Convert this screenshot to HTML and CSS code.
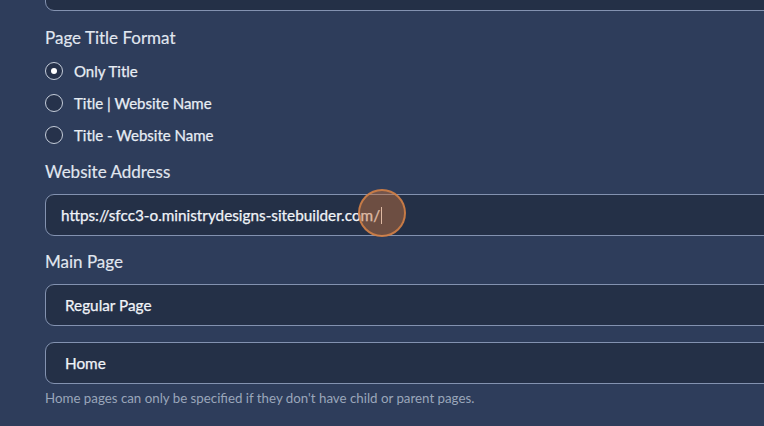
FILE: index.html
```html
<!DOCTYPE html>
<html lang="en">
<head>
<meta charset="utf-8">
<title>Site Settings</title>
<link rel="stylesheet" href="styles.css">
</head>
<body>
<div class="form">
  <div class="field field-top">
    <div class="input"></div>
  </div>

  <div class="field">
    <div class="label">Page Title Format</div>
    <div class="radios">
      <label class="radio-row"><span class="radio checked"></span><span>Only Title</span></label>
      <label class="radio-row"><span class="radio"></span><span>Title | Website Name</span></label>
      <label class="radio-row"><span class="radio"></span><span>Title - Website Name</span></label>
    </div>
  </div>

  <div class="field">
    <div class="label">Website Address</div>
    <div class="input input-url">
      <span class="value">https://sfcc3-o.ministrydesigns-sitebuilder.com/</span><span class="caret"></span>
      <span class="click"></span>
    </div>
  </div>

  <div class="field">
    <div class="label label-main">Main Page</div>
    <div class="input input-select"><span class="value">Regular Page</span></div>
    <div class="input input-select second"><span class="value">Home</span></div>
    <div class="help">Home pages can only be specified if they don't have child or parent pages.</div>
  </div>
</div>
</body>
</html>
```
FILE: styles.css
```css
html, body {
  margin: 0;
  padding: 0;
  overflow: hidden;
  background: #2e3d5b;
}
body {
  font-family: "Lato", "Noto Sans", sans-serif;
  color: #e3e9f2;
  width: 764px;
  height: 426px;
}
.form {
  display: flex;
  flex-direction: column;
  padding-left: 45px;
  width: 780px;
}
.field {
  display: flex;
  flex-direction: column;
}
.field-top {
  margin-top: -31px;
}
.label {
  font-size: 17px;
  line-height: 24px;
  color: #e1e7f0;
  margin-top: 15px;
  margin-bottom: 10px;
  -webkit-text-stroke: 0.15px #e1e7f0;
}
.label-main {
  margin-top: 14px;
}
.input {
  position: relative;
  box-sizing: border-box;
  height: 42px;
  background: #243047;
  border: 1px solid #8392b0;
  border-radius: 9px;
  display: flex;
  align-items: center;
  font-size: 15.3px;
  font-weight: 400;
  color: #f0f3f8;
  -webkit-text-stroke: 0.25px #f0f3f8;
}
.input-url {
  padding-left: 15px;
}
.input-select {
  padding-left: 19px;
}
.second {
  margin-top: 16px;
}
.caret {
  display: inline-block;
  width: 1px;
  height: 17px;
  background: #f0f3f8;
  margin-left: 1px;
}
.click {
  position: absolute;
  left: 312px;
  top: -6px;
  width: 48px;
  height: 48px;
  border-radius: 50%;
  border: 2px solid rgba(214, 130, 70, 0.85);
  background: rgba(200, 115, 60, 0.45);
  box-sizing: border-box;
}
.radios {
  display: flex;
  flex-direction: column;
  gap: 12px;
  margin-top: 1px;
}
.radio-row {
  display: flex;
  align-items: center;
  gap: 11px;
  height: 20px;
  font-size: 15px;
  font-weight: 400;
  color: #e8edf4;
  -webkit-text-stroke: 0.25px #e8edf4;
}
.radio {
  box-sizing: border-box;
  width: 18px;
  height: 18px;
  border-radius: 50%;
  border: 1.5px solid #c5cdda;
  background: #26324b;
  display: flex;
  align-items: center;
  justify-content: center;
  -webkit-text-stroke: 0;
}
.radio.checked::after {
  content: "";
  width: 6px;
  height: 6px;
  border-radius: 50%;
  background: #ffffff;
}
.help {
  margin-top: 5px;
  font-size: 13.3px;
  line-height: 18px;
  color: #9aa6ba;
}
```
